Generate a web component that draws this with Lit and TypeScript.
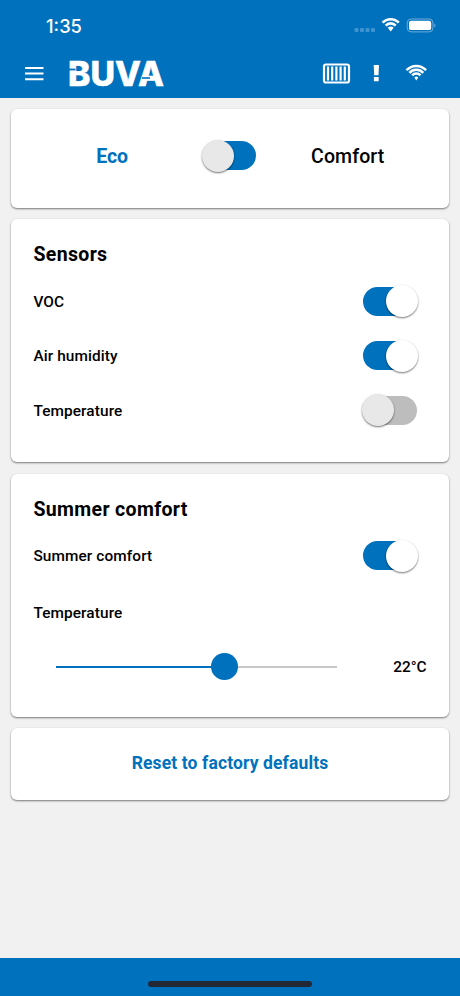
import { LitElement, html, css, svg } from "lit";
import { customElement, property } from "lit/decorators.js";

@customElement("toggle-switch")
class ToggleSwitch extends LitElement {
  @property({ type: Boolean }) on = false;
  @property({ type: Boolean }) tinted = false;

  static styles = css`
    :host { display: block; width: 57px; height: 34px; flex: none; }
    .box { position: relative; width: 57px; height: 34px; }
    .track { position: absolute; left: 3px; top: 2px; width: 52.5px; height: 29px; border-radius: 15px; background: #bdbdbd; }
    .blue { background: #0071bc; }
    .thumb { position: absolute; left: 0.8px; top: 0.6px; width: 32px; height: 32px; border-radius: 50%; background: #e8e8e8; box-shadow: 0 1px 2px rgba(0, 0, 0, 0.55); }
    .on { left: 25px; background: #fff; }
    .track.on { left: 2px; background: #0071bc; }
  `;

  render() {
    return html`<div class="box">
      <div class="track ${this.on ? "on" : this.tinted ? "blue" : ""}"></div>
      <div class="thumb ${this.on ? "on" : ""}"></div>
    </div>`;
  }
}

@customElement("app-root")
class AppRoot extends LitElement {
  static styles = css`
    :host { display: flex; flex-direction: column; height: 996px; width: 460px; background: #f1f1f1; font-family: Roboto, "Open Sans", sans-serif; color: #000; overflow: hidden; }
    * { box-sizing: border-box; }
    svg { display: block; }
    header { height: 98px; background: #0071bc; flex: none; color: #fff; }
    .status { height: 50px; display: flex; align-items: center; padding: 2px 23px 0 46px; }
    .time { font: 500 18.3px/24px Inter, sans-serif; flex: 1; }
    .bar { height: 48px; display: flex; align-items: center; padding: 0 33px 0 25px; }
    .logo { margin-left: 24.5px; margin-right: auto; flex: none; }
    .logo text { font: 800 33.5px Inter, sans-serif; fill: #fff; }
    .waves path { fill: none; stroke: #fff; }
    .waves .dot { fill: #fff; stroke: none; }
    main { flex: 1; padding: 11px 11.4px 0; display: flex; flex-direction: column; gap: 11.4px; }
    .card { background: #fff; border-radius: 6px; box-shadow: 0 1px 2px rgba(0, 0, 0, 0.5); flex: none; width: 437.2px; }
    .mode { height: 99px; display: grid; grid-template-columns: 189.5px 57px 1fr; padding-top: 30px; }
    .mode span { font-size: 20px; line-height: 36px; text-align: center; }
    .mode .eco { color: #0071bc; font-weight: 700; padding-left: 12px; font-size: 19.5px; }
    .mode .comfort { padding-right: 11px; font-size: 19.5px; font-weight: 500; letter-spacing: 0.1px; }
    .sensors { height: 243px; padding: 22px 30.5px 0 22px; }
    .summer { height: 243px; padding: 22px 22px 0 22px; }
    h2 { margin: 0; font-size: 19.5px; line-height: 28px; font-weight: 700; letter-spacing: 0.35px; }
    .row { display: flex; justify-content: space-between; align-items: center; height: 54.5px; font-size: 15.4px; font-weight: 500; letter-spacing: 0.1px; }
    .first { margin-top: 5px; }
    .summer .row { padding-right: 8.5px; }
    .label { font-size: 15.4px; line-height: 20px; margin-top: 19.5px; font-weight: 500; letter-spacing: 0.1px; }
    .slide { display: flex; align-items: center; justify-content: space-between; height: 28px; margin-top: 30px; padding-left: 22.5px; font-size: 15.4px; font-weight: 500; }
    .rail { width: 281px; height: 2px; background: #c8c8c8; position: relative; }
    .fill { height: 2px; background: #0071bc; }
    .knob { position: absolute; top: -12.3px; width: 26.6px; height: 26.6px; margin-left: -13.3px; border-radius: 50%; background: #0071bc; }
    .reset { height: 72px; text-align: center; color: #0071bc; font-size: 17.5px; font-weight: 700; line-height: 70px; letter-spacing: 0.12px; }
    footer { height: 38px; background: #0071bc; flex: none; display: flex; justify-content: center; padding-top: 23px; }
    .home { width: 164px; height: 6px; border-radius: 3px; background: #232837; }
  `;

  /* Concentric quarter arcs, centred on (cx, cy). */
  private arcs(cx: number, cy: number, radii: number[], width: number, dot: number) {
    const k = 0.735;
    const h = 0.678;
    return svg`<g class="waves" stroke-width=${width}>
      ${radii.map((r) => svg`<path d="M${cx - r * k} ${cy - r * h}A${r} ${r} 0 0 1 ${cx + r * k} ${cy - r * h}" />`)}
      <path class="dot" d="M${cx} ${cy + 1.2}L${cx - dot * 0.75} ${cy - dot * 0.62}A${dot} ${dot} 0 0 1 ${cx + dot * 0.75} ${cy - dot * 0.62}Z" />
    </g>`;
  }

  render() {
    const pct = 60;
    return html`
      <header>
        <div class="status">
          <span class="time">1:35</span>
          <svg width="83" height="20" viewBox="354 15 83 20">
            <g fill="#3f94d0"><rect x="354.500" y="27" width="4" height="4" rx="1" /><rect x="360" y="27" width="4" height="4" rx="1" /><rect x="365.500" y="27" width="4" height="4" rx="1" /><rect x="371" y="27" width="4" height="4" rx="1" /></g>
            ${this.arcs(390.7, 29.2, [11, 6.8], 2.6, 3.9)}
            <rect x="407.200" y="18" width="25.800" height="12.900" rx="4" fill="none" stroke="#70add9" />
            <rect x="409" y="19.800" width="22.200" height="9.300" rx="2.200" fill="#fff" />
            <path d="M434.300 22.400q2.600 2 0 4z" fill="#70add9" />
          </svg>
        </div>
        <div class="bar">
          <svg width="18.500" height="14" viewBox="0 0 18.5 14"><path d="M0 .9H18.500M0 6.500H18.500M0 12.200H18.500" stroke="#fff" stroke-width="2" /></svg>
          <svg class="logo" width="104" height="44" viewBox="0 0 104 44">
            <text x="0" y="34" textLength="96" lengthAdjust="spacingAndGlyphs" stroke="#fff" stroke-width=".5">BUVA</text>
            <path d="M0 17.500h7.500" stroke="#0071bc" stroke-width="1.800" />
            <path d="M74 26h8" stroke="#0071bc" stroke-width="1.600" />
          </svg>
          <svg width="105" height="24" viewBox="322 62 105 24">
            <rect x="324" y="64.500" width="25" height="18" rx="2" fill="none" stroke="#fff" stroke-width="2.200" />
            <path d="M328 66.500v14M332.200 66.500v14M336.400 66.500v14M340.600 66.500v14M344.800 66.500v14" stroke="#fff" stroke-width="2.200" />
            <path d="M373.700 65h5.300l-.5 10.300h-4.300zM373.900 77h4.800v4.300h-4.800z" fill="#fff" />
            ${this.arcs(416.3, 79.2, [13.3, 9.4, 5.6], 2.5, 2.6)}
          </svg>
        </div>
      </header>
      <main>
        <section class="card mode"><span class="eco">Eco</span><toggle-switch tinted></toggle-switch><span class="comfort">Comfort</span></section>
        <section class="card sensors">
          <h2>Sensors</h2>
          <div class="row first">VOC<toggle-switch on></toggle-switch></div>
          <div class="row">Air humidity<toggle-switch on></toggle-switch></div>
          <div class="row">Temperature<toggle-switch></toggle-switch></div>
        </section>
        <section class="card summer">
          <h2>Summer comfort</h2>
          <div class="row first">Summer comfort<toggle-switch on></toggle-switch></div>
          <div class="label">Temperature</div>
          <div class="slide"><div class="rail"><div class="fill" style="width:${pct}%"></div><div class="knob" style="left:${pct}%"></div></div><span>22°C</span></div>
        </section>
        <section class="card reset">Reset to factory defaults</section>
      </main>
      <footer><div class="home"></div></footer>
    `;
  }
}
